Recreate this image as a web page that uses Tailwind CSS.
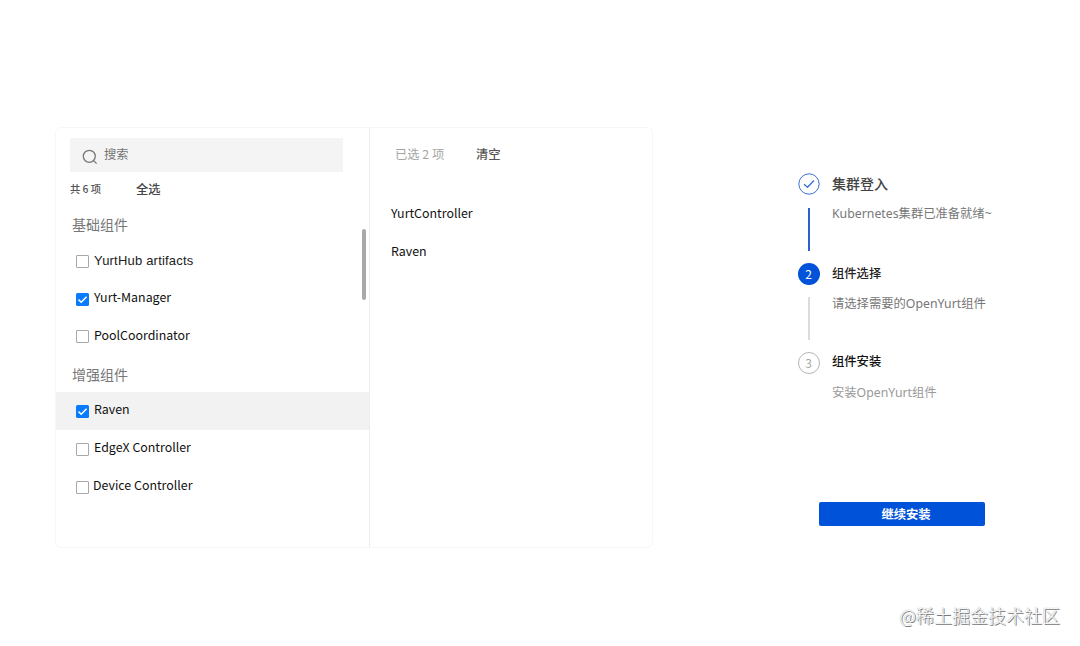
<!DOCTYPE html>
<html lang="zh-CN">
<head>
    <meta charset="UTF-8">
    <meta name="viewport" content="width=device-width, initial-scale=1.0">
    <title>组件选择</title>
    <script src="https://cdn.jsdelivr.net/npm/@tailwindcss/browser@4"></script>
    <style>
        body { font-family: 'Noto Sans CJK SC', sans-serif; }
    </style>
</head>
<body class="bg-white">

    <div class="relative flex items-start w-[1080px] h-[646px] pl-[55px] pt-[127px] overflow-hidden">

        <!-- 组件面板 -->
        <div class="flex w-[598px] h-[421px] shrink-0 border border-[#f7f7f7] rounded-md">

            <div class="relative w-[314px] border-r border-[#ededed]">
                <div class="flex items-center gap-[6px] w-[273px] h-[34px] mt-[10px] ml-[14px] pl-3 bg-[#f4f4f4]">
                    <svg class="size-4 mt-[3px] text-[#777]" viewBox="0 0 16 16" fill="none" stroke="currentColor" stroke-width="1.3">
                        <circle cx="7.3" cy="7.3" r="6"/>
                        <path d="M11.6 11.6L14.6 14.6"/>
                    </svg>
                    <span class="pb-[2px] text-[12.3px] text-[#757575]">搜索</span>
                </div>

                <div class="flex items-center h-[34px] pl-[14px]">
                    <span class="w-[66px] text-[10.3px] font-medium text-[#555]">共 6 项</span>
                    <span class="text-[12.3px] font-medium text-[#444]">全选</span>
                </div>

                <div class="flex items-center h-[38px] pl-4 pb-[2px] text-sm text-[#777]">基础组件</div>
                <label class="flex items-center gap-[5px] h-[35px] pl-5 text-[13px] text-[#222]">
                    <span class="size-[13px] border border-[#a8a8a8] rounded-[1px]"></span>
                    <span class="pb-px font-[Liberation_Sans] tracking-[0.2px]">YurtHub artifacts</span>
                </label>
                <label class="flex items-center gap-[5px] h-[37px] pl-5 text-[12.4px] text-[#111]">
                    <svg class="size-[13px] mt-[3px]" viewBox="0 0 13 13" fill="none">
                        <rect width="13" height="13" rx="1.5" fill="#0a7aff"/>
                        <path d="M2.5 6.6L5.2 9.3L10.6 3.7" stroke="#fff" stroke-width="1.5"/>
                    </svg>
                    <span class="pb-px">Yurt-Manager</span>
                </label>
                <label class="flex items-center gap-[5px] h-[38px] pl-5 text-[12.4px] text-[#111]">
                    <span class="size-[13px] mt-[3px] border border-[#a8a8a8] rounded-[1px]"></span>
                    <span>PoolCoordinator</span>
                </label>

                <div class="flex items-center h-[38px] pl-4 pt-px text-sm text-[#777]">增强组件</div>
                <label class="flex items-center gap-[5px] h-[38px] pl-5 pb-[2px] bg-[#f2f2f2] text-[12.4px] text-[#111]">
                    <svg class="size-[13px] mt-[3px]" viewBox="0 0 13 13" fill="none">
                        <rect width="13" height="13" rx="1.5" fill="#0a7aff"/>
                        <path d="M2.5 6.6L5.2 9.3L10.6 3.7" stroke="#fff" stroke-width="1.5"/>
                    </svg>
                    <span class="pb-px">Raven</span>
                </label>
                <label class="flex items-center gap-[5px] h-[38px] pl-5 pb-[2px] text-[12.4px] text-[#111]">
                    <span class="size-[13px] mt-[3px] border border-[#a8a8a8] rounded-[1px]"></span>
                    <span class="pb-px">EdgeX Controller</span>
                </label>
                <label class="flex items-center gap-1 h-[38px] pl-5 pb-[2px] text-[12.4px] text-[#111]">
                    <span class="size-[13px] mt-[3px] border border-[#a8a8a8] rounded-[1px]"></span>
                    <span class="pb-px">Device Controller</span>
                </label>

                <div class="absolute top-[101px] right-[3px] w-1 h-[71px] rounded-full bg-[#a9a9a9]"></div>
            </div>

            <div class="flex-1">
                <div class="flex items-center h-[34px] mt-[9px] pl-[25px] text-[12.3px]">
                    <span class="w-[81px] text-[#a5a5a5]">已选 2 项</span>
                    <span class="font-medium text-[#555]">清空</span>
                </div>
                <div class="mt-[23px] pl-[21px] text-[12.4px] leading-[38px] text-[#111]">
                    <div>YurtController</div>
                    <div>Raven</div>
                </div>
            </div>
        </div>

        <!-- 安装步骤 -->
        <div class="w-[200px] ml-[144px] mt-[46px]">
            <div class="flex gap-3 h-[90px]">
                <div class="flex flex-col items-center w-[23px]">
                    <svg class="size-[22px]" viewBox="0 0 22 22" fill="none" stroke="#3a74d8">
                        <circle cx="11" cy="11" r="10.2"/>
                        <path d="M6 11.3L9.5 14.3L16 7.6" stroke-width="1.4"/>
                    </svg>
                    <div class="w-[2px] h-[43px] mt-[13px] bg-[#2a62cc]"></div>
                </div>
                <div>
                    <div class="text-sm leading-[20px] font-medium text-[#444]">集群登入</div>
                    <div class="mt-[10px] text-[12.3px] leading-[22px] text-[#777] whitespace-nowrap font-[Noto_Sans,Noto_Sans_CJK_SC,sans-serif]">Kubernetes集群已准备就绪~</div>
                </div>
            </div>
            <div class="flex gap-3 h-[89px]">
                <div class="flex flex-col items-center w-[23px]">
                    <div class="size-[22px] rounded-full bg-[#0052d9] text-white text-xs leading-[22px] text-center">2</div>
                    <div class="w-[2px] h-[43px] mt-3 bg-[#dcdcdc]"></div>
                </div>
                <div>
                    <div class="text-[12.3px] leading-[20px] font-medium text-[#222]">组件选择</div>
                    <div class="mt-[10px] text-[12.3px] leading-[22px] text-[#777] whitespace-nowrap font-[Noto_Sans,Noto_Sans_CJK_SC,sans-serif]">请选择需要的OpenYurt组件</div>
                </div>
            </div>
            <div class="flex gap-3">
                <div class="w-[23px]">
                    <div class="size-[22px] mx-auto rounded-full border border-[#b5b5b5] text-[#a5a5a5] text-xs leading-[20px] text-center">3</div>
                </div>
                <div>
                    <div class="text-[12.3px] leading-[18px] font-medium text-[#111]">组件安装</div>
                    <div class="mt-[12px] text-[12.3px] leading-[22px] text-[#999] whitespace-nowrap font-[Noto_Sans,Noto_Sans_CJK_SC,sans-serif]">安装OpenYurt组件</div>
                </div>
            </div>

            <button class="block w-[166px] h-[24px] ml-[22px] mt-[98px] pl-2 rounded-[2px] bg-[#0052d9] text-white text-[12.3px] font-bold">继续安装</button>
        </div>

        <div class="absolute right-[20px] top-[602px] text-[18px] leading-[26px] font-light text-white [text-shadow:1px_1px_0_#777,0_0_1px_#888]">@稀土掘金技术社区</div>
    </div>

</body>
</html>
